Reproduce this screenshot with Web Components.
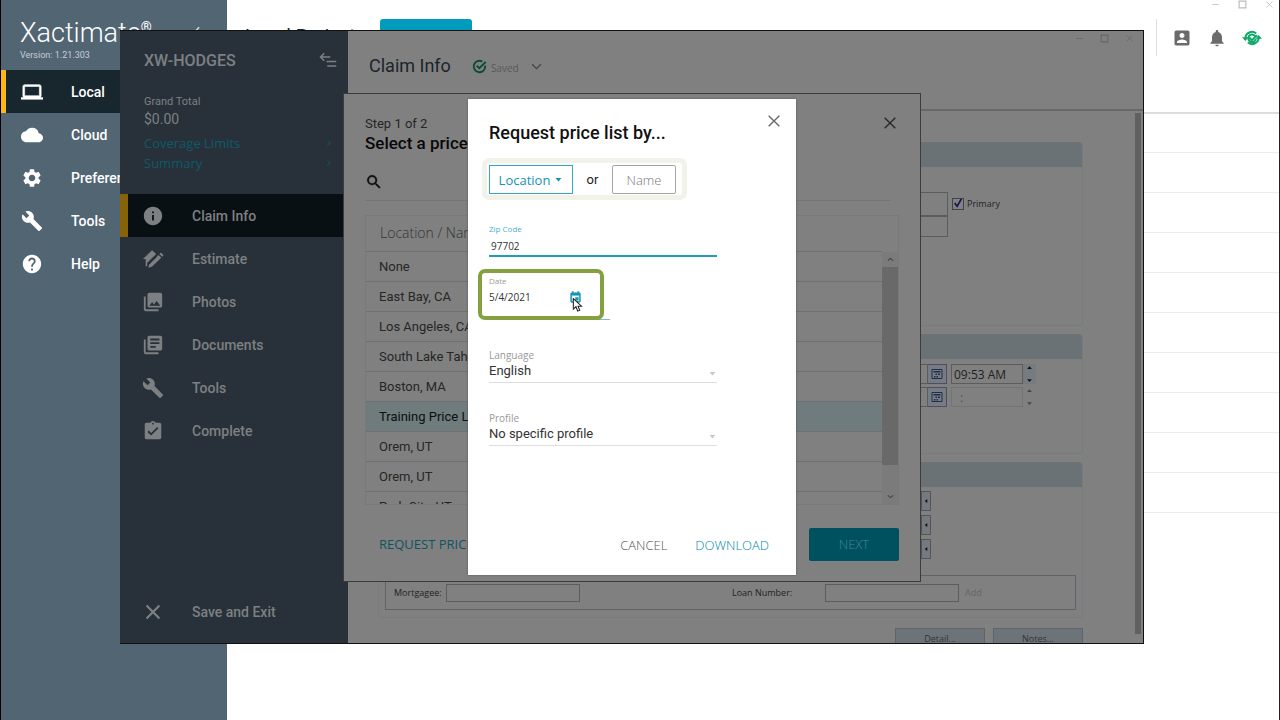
<!DOCTYPE html>
<html lang="en">
<head>
<meta charset="utf-8">
<title>Xactimate</title>
<style>
html,body{height:100%;margin:0}
body{font-family:Roboto,sans-serif;background:#fff;overflow:hidden}
</style>
</head>
<body>
<xm-app></xm-app>
<script>
const define = (name, css, html) => customElements.define(name, class extends HTMLElement {
  connectedCallback() {
    if (this.shadowRoot) return;
    const root = this.attachShadow({ mode: 'open' });
    root.innerHTML = '<style>*{box-sizing:border-box}button,input,select{font:inherit;color:inherit;margin:0;padding:0;border:0;background:none;border-radius:0;appearance:none;outline:0}a{color:inherit;text-decoration:none}' + css + '</style>' + (typeof html === 'function' ? html(this) : html);
  }
});

const ICONS = {
  laptop: '<path d="M20 18c1.100 0 2-.9 2-2V6c0-1.100-.9-2-2-2H4c-1.100 0-2 .9-2 2v10c0 1.100.9 2 2 2H0v2h24v-2h-4zM4 6h16v10H4V6z" stroke="currentColor" stroke-width=".6"/>',
  cloud: '<path d="M19.350 10.040A7.490 7.490 0 0 0 12 4C9.110 4 6.600 5.640 5.350 8.040A5.994 5.994 0 0 0 0 14c0 3.310 2.690 6 6 6h13c2.760 0 5-2.240 5-5 0-2.640-2.050-4.780-4.650-4.960z"/>',
  gear: '<path d="M19.140 12.940c.04-.3.06-.61.06-.94 0-.32-.02-.64-.07-.94l2.030-1.580a.49.49 0 0 0 .12-.61l-1.920-3.320a.488.488 0 0 0-.59-.22l-2.390.96c-.5-.38-1.030-.7-1.620-.94l-.36-2.540a.484.484 0 0 0-.48-.41h-3.840c-.24 0-.43.17-.47.41l-.36 2.540c-.59.24-1.130.57-1.620.94l-2.390-.96c-.22-.08-.47 0-.59.22L2.740 8.870c-.12.21-.08.47.12.61l2.030 1.580c-.05.3-.09.63-.09.94s.02.64.07.94l-2.030 1.580a.49.49 0 0 0-.12.61l1.920 3.320c.12.22.37.29.59.22l2.390-.96c.5.38 1.030.7 1.620.94l.36 2.540c.05.24.24.41.48.41h3.840c.24 0 .44-.17.47-.41l.36-2.540c.59-.24 1.130-.56 1.620-.94l2.390.96c.22.08.47 0 .59-.22l1.920-3.320c.12-.22.07-.47-.12-.61l-2.010-1.580zM12 15.600c-1.980 0-3.600-1.620-3.600-3.600s1.620-3.600 3.600-3.600 3.600 1.620 3.600 3.600-1.620 3.600-3.600 3.600z"/>',
  wrench: '<path d="M22.700 19l-9.100-9.100c.9-2.300.4-5-1.500-6.900-2-2-5-2.400-7.400-1.300L9 6 6 9 1.600 4.700C.4 7.100.9 10.100 2.900 12.100c1.900 1.900 4.600 2.400 6.900 1.500l9.100 9.100c.4.4 1 .4 1.400 0l2.300-2.300c.5-.4.5-1.100.1-1.400z"/>',
  help: '<path d="M12 2C6.480 2 2 6.480 2 12s4.480 10 10 10 10-4.480 10-10S17.520 2 12 2zm1 17h-2v-2h2v2zm2.070-7.750-.9.920C13.450 12.900 13 13.500 13 15h-2v-.5c0-1.100.45-2.100 1.170-2.830l1.240-1.260c.37-.36.59-.86.59-1.410 0-1.100-.9-2-2-2s-2 .9-2 2H8c0-2.210 1.790-4 4-4s4 1.790 4 4c0 .88-.36 1.680-.93 2.250z"/>',
  info: '<path d="M12 2C6.480 2 2 6.480 2 12s4.480 10 10 10 10-4.480 10-10S17.520 2 12 2zm1 15h-2v-6h2v6zm0-8h-2V7h2v2z"/>',
  estimate: '<path d="M1 12 11 2.500l4.500 4-9.800 9.600V20H4v-8z"/><path d="M7 21.500l.8-4L18 7.500l3 3-10.200 10z"/><path d="M19 6.500l1.500-1.500 3 3L22 9.500z"/><path d="M7.500 17.500 16 9.200" stroke="#283139" stroke-width="1.200"/>',
  photos: '<path d="M22 16V4c0-1.100-.9-2-2-2H8c-1.100 0-2 .9-2 2v12c0 1.100.9 2 2 2h12c1.100 0 2-.9 2-2zm-11-4 2.030 2.710L16 11l4 5H8l3-4zM2 6v14c0 1.100.9 2 2 2h14v-2H4V6H2z"/>',
  docs: '<path d="M4 6H2v14c0 1.100.9 2 2 2h14v-2H4V6zm16-4H8c-1.100 0-2 .9-2 2v12c0 1.100.9 2 2 2h12c1.100 0 2-.9 2-2V4c0-1.100-.9-2-2-2zm-1 9H9V9h10v2zm-4 4H9v-2h6v2zm4-8H9V5h10v2z"/>',
  complete: '<path d="M19 3h-4.180C14.400 1.840 13.300 1 12 1s-2.400.84-2.820 2H5c-1.100 0-2 .9-2 2v14c0 1.100.9 2 2 2h14c1.100 0 2-.9 2-2V5c0-1.100-.9-2-2-2zm-7 0c.55 0 1 .45 1 1s-.45 1-1 1-1-.45-1-1 .45-1 1-1zm-2 14-4-4 1.410-1.410L10 14.170l6.590-6.590L18 9l-8 8z"/>',
  close: '<path d="M4 4 20 20M20 4 4 20" fill="none" stroke="currentColor" stroke-width="2"/>',
  exit: '<path d="M5 5 19 19M19 5 5 19" fill="none" stroke="currentColor" stroke-width="2.400"/>',
  collapse: '<path d="M7 3 2 8l5 5M2 8h13M10 14h13M11 20h12" fill="none" stroke="currentColor" stroke-width="2"/>',
  search: '<path d="M15.500 14h-.79l-.28-.27A6.471 6.471 0 0 0 16 9.500 6.500 6.500 0 1 0 9.500 16c1.610 0 3.090-.59 4.230-1.570l.27.28v.79l5 4.990L20.490 19l-4.990-5zm-6 0C7.010 14 5 11.990 5 9.500S7.010 5 9.500 5 14 7.010 14 9.500 11.990 14 9.500 14z" stroke="currentColor" stroke-width=".5"/>',
  saved: '<path d="M21 10.500A9.200 9.200 0 1 1 16.500 4M7.500 10.500l4.200 4.200L22 4.500" fill="none" stroke="currentColor" stroke-width="3"/>',
  chevron: '<path d="M4 8l8 8 8-8" fill="none" stroke="currentColor" stroke-width="2.500"/>',
  up: '<path d="M5 15l7-6 7 6" fill="none" stroke="currentColor" stroke-width="3"/>',
  down: '<path d="M5 9l7 6 7-6" fill="none" stroke="currentColor" stroke-width="3"/>',
  right: '<path d="M7 5l9 7-9 7" fill="none" stroke="currentColor" stroke-width="2.500"/>',
  triangle: '<path d="M4 8h16l-8 9z"/>',
  triangleUp: '<path d="M4 17h16l-8-9z"/>',
  triangleLeft: '<path d="M17 4v16l-10-8z"/>',
  person: '<path d="M3 5v14c0 1.100.89 2 2 2h14c1.100 0 2-.9 2-2V5c0-1.100-.9-2-2-2H5c-1.110 0-2 .9-2 2zm12 4c0 1.660-1.340 3-3 3s-3-1.340-3-3 1.340-3 3-3 3 1.340 3 3zm-9 8c0-2 4-3.100 6-3.100s6 1.100 6 3.100v1H6v-1z"/>',
  bell: '<path d="M12 22c1.100 0 2-.9 2-2h-4c0 1.100.89 2 2 2zm6-6v-5c0-3.070-1.640-5.640-4.500-6.320V4c0-.83-.67-1.500-1.500-1.500s-1.500.67-1.500 1.500v.68C7.630 5.360 6 7.920 6 11v5l-2 2v1h16v-1l-2-2z"/>',
  sync: '<path d="M4 12a8 8 0 0 1 13-5.500M20 12a8 8 0 0 1-13 5.500M15.500 9.500A4.500 4.500 0 1 0 16.500 13M9 11.500l3 3 6-6" fill="none" stroke="currentColor" stroke-width="2.400"/><path d="M0 11h8l-4 4.500zM16 13h8l-4-4.500z"/>',
  minus: '<path d="M3 12h18" fill="none" stroke="currentColor" stroke-width="2"/>',
  square: '<path d="M3 3h18v18H3z" fill="none" stroke="currentColor" stroke-width="3"/>',
  calendar: '<path d="M17 12h-5v5h5v-5zM16 1v2H8V1H6v2H5c-1.110 0-1.990.9-1.990 2L3 19c0 1.100.89 2 2 2h14c1.100 0 2-.9 2-2V5c0-1.100-.9-2-2-2h-1V1h-2zm3 18H5V8h14v11z" stroke="currentColor"/>',
  grid: '<path d="M2 3h20v18H2z" fill="none" stroke="currentColor" stroke-width="2"/><path d="M5 6h14v3H5zM9 11h3v3H9zM14 11h4v3h-4zM6 16h3v3H6zM11 16h3v3h-3z"/>',
  cursor: '<path d="M4 1v18l4.500-4 3 7.500 3.500-1.500-3-7H18z" fill="#fff" stroke="#222" stroke-width="1.800"/>'
};

define('xm-icon', ':host{display:inline-flex;flex:none;width:var(--s,20px);height:var(--s,20px)}svg{width:100%;height:100%;display:block}',
  el => `<svg viewBox="0 0 24 24" fill="currentColor" aria-hidden="true">${ICONS[el.getAttribute('name')]}</svg>`);

define('xm-nav-item', `:host{display:block}
a{display:flex;align-items:center;height:43px;padding-left:var(--pad,20px);gap:28px;font-size:14px;font-weight:500;line-height:20px;white-space:nowrap}
:host([active]) a{background:var(--active-bg);box-shadow:inset var(--bar,5px) 0 0 var(--accent)}`,
  el => `<a href="#"><xm-icon name="${el.getAttribute('icon')}" style="--s:22px"></xm-icon><span><slot></slot></span></a>`);

define('xm-window-buttons', `:host{display:flex;gap:var(--g,16px);color:var(--c,#bbb)}button{display:flex}`,
  `<button aria-label="Minimize"><xm-icon name="minus" style="--s:9px"></xm-icon></button><button aria-label="Maximize"><xm-icon name="square" style="--s:9px"></xm-icon></button><button aria-label="Close"><xm-icon name="close" style="--s:9px"></xm-icon></button>`);

define('xm-sidebar', `:host{display:block;width:227px;flex:none;background:#526573;color:#fff;border-left:1px solid #000;--active-bg:#18262e;--accent:#fdb813}
header{height:70px;padding:17px 15px 0 19px;display:flex;justify-content:space-between}
h1{margin:0;font-weight:300;font-size:27px;line-height:32px;display:flex}
sup{font-size:14px;line-height:20px;font-weight:400}
p{margin:0;font-size:9px;line-height:12px;color:#c5ced5}
xm-icon{margin-top:8px;color:#d5dbe0}`,
  `<header><div><h1>Xactimate<sup>®</sup></h1><p>Version: 1.21.303</p></div><xm-icon name="collapse" style="--s:18px"></xm-icon></header>
<nav><xm-nav-item icon="laptop" active>Local</xm-nav-item><xm-nav-item icon="cloud">Cloud</xm-nav-item><xm-nav-item icon="gear">Preferences</xm-nav-item><xm-nav-item icon="wrench">Tools</xm-nav-item><xm-nav-item icon="help">Help</xm-nav-item></nav>`);

define('xm-projects', `:host{display:block;flex:1;min-width:0;border-right:1px solid #222}
header{height:114px;border-bottom:2px solid #dcdcdc;display:flex;flex-direction:column}
xm-window-buttons{align-self:flex-end;height:12px;margin-right:5px;--g:18px}
.bar{display:flex;align-items:flex-start;padding:7px 17px 0 18px}
h2{margin:5px 0 0;font-size:19px;line-height:24px;font-weight:400;color:#18262e;width:135px;white-space:nowrap}
.new{width:92px;height:36px;background:#009bbd;border-radius:3px}
.tools{margin-left:auto;display:flex;align-items:center;gap:15px;height:37px;border-left:1px solid #ddd;padding-left:15px;color:#6b6b6b}
.tools button{display:flex}.sync{color:#0ea968}
ul{list-style:none;margin:0;padding:0}li{height:40px;border-bottom:1px solid #ececec}li:first-child{height:39px}`,
  `<header><xm-window-buttons></xm-window-buttons><div class="bar"><h2>Local Projects</h2><button class="new" aria-label="New project"></button>
<div class="tools"><button aria-label="Account"><xm-icon name="person"></xm-icon></button><button aria-label="Notifications"><xm-icon name="bell"></xm-icon></button><button class="sync" aria-label="Sync"><xm-icon name="sync"></xm-icon></button></div></div></header>
<ul>${'<li></li>'.repeat(10)}</ul>`);

define('xm-project-nav', `:host{display:flex;flex-direction:column;width:228px;flex:none;background:#283139;color:#7d8083;--active-bg:#091013;--accent:#866309;--bar:8px;--pad:22px}
header{height:163px;padding:20px 11px 0 24px}
.top{display:flex;justify-content:space-between}
h2{margin:0;font-size:16px;line-height:20px;font-weight:500}
.total{font-size:11px;line-height:14px;margin:24px 0 0}
.sum{font-size:14px;line-height:20px;margin:0 0 4px}
.link{display:flex;justify-content:space-between;align-items:center;font:13px/20px "Open Sans",sans-serif;color:#0e5a6b;padding-right:4px}
nav{flex:1}.exit{margin-bottom:10px}`,
  `<header><div class="top"><h2>XW-HODGES</h2><xm-icon name="collapse" style="--s:18px"></xm-icon></div>
<p class="total">Grand Total</p><p class="sum">$0.00</p>
<a class="link" href="#">Coverage Limits<xm-icon name="right" style="--s:8px"></xm-icon></a><a class="link" href="#">Summary<xm-icon name="right" style="--s:8px"></xm-icon></a></header>
<nav><xm-nav-item icon="info" active>Claim Info</xm-nav-item><xm-nav-item icon="estimate">Estimate</xm-nav-item><xm-nav-item icon="photos">Photos</xm-nav-item><xm-nav-item icon="docs">Documents</xm-nav-item><xm-nav-item icon="wrench">Tools</xm-nav-item><xm-nav-item icon="complete">Complete</xm-nav-item></nav>
<xm-nav-item class="exit" icon="exit">Save and Exit</xm-nav-item>`);

define('xm-group', `:host{display:block;border:1px solid #787b7c;border-top:0;border-radius:4px;margin-bottom:8px}
.head{height:25px;background:#6b7276;border-radius:4px 4px 0 0}`, `<div class="head"></div><slot></slot>`);

define('xm-claim', `:host{display:flex;flex-direction:column;flex:1;min-width:0;background:#808080;color:#222;font:9px/14px "Open Sans",sans-serif}
header{height:80px;flex:none;border-bottom:2px solid #686868;display:flex;flex-direction:column}
xm-window-buttons{align-self:flex-end;margin:3px 10px 0 0;--c:#666}
.title{display:flex;align-items:center;padding:11px 0 0 21px}
h2{margin:0 21px 0 0;font:400 18px/24px Roboto,sans-serif;color:#1b242b}
.ok{color:#0a4a34;margin-right:4px}.saved{font-size:10px;line-height:14px;padding-top:3px;color:#5a5a5a;margin-right:11px}.chev{color:#444}
.body{flex:1;min-height:0;overflow:hidden;display:flex;padding-right:3px}
.form{flex:1;min-width:0;padding:31px 52px 0 30px}
.track{width:6px;margin:2px 0 9px;background:#606060}
.g1{height:184px}.g2{height:120px}.g3{height:156px;margin-bottom:10px}
.row{display:flex;align-items:center}
input{border:1px solid #5c5c5c;height:20px}
.wide{flex:1;min-width:0}
.name{padding-right:77px;margin-top:25px;gap:4px}.name input.wide{height:24px}
.second{padding-right:134px}.second input{height:21px}
input[type=checkbox]{width:12px;height:12px;border:1px solid #444;background:#80808c;display:block}
.check{display:flex;align-items:center;gap:3px;position:relative;width:53px}
.check svg{position:absolute;left:1px;top:1px;width:10px;height:10px;pointer-events:none}
.when{padding-right:46px;margin-top:5px}.when+.when{margin-top:3px}
.cal{width:19px;height:20px;border:1px solid #4b515c;border-left:0;display:grid;place-items:center;color:#202c4c;background:#777c84;margin-right:4px}
.time{width:72px;font-size:12px;padding:0 2px;color:#222}.off{border-color:#747474;color:#555;padding-left:8px}
.spin{width:13px;height:20px;display:flex;flex-direction:column;align-items:center;justify-content:space-between;background:#767b80;color:#111}
.spin button{display:flex}
.idle{background:none;color:#444}
.pick{padding-right:151px;margin-top:4px}.pick .arrow{width:10px;height:20px;border:1px solid #555;display:grid;place-items:center;background:#747a80;color:#111}
.mort{border:1px solid #60646a;margin:16px 6px 0;height:35px;padding:0 8px;gap:4px}
.mort input{height:18px;width:134px}.add{color:#666;margin-left:2px;width:102px;text-align:left;line-height:14px}.loan{margin-left:auto;width:89px}
.buttons{display:flex;justify-content:flex-end;gap:8px}.buttons button{width:90px;height:22px;border:1px solid #5e6469;background:#6d7479;color:#333;flex:none}`,
  `<header><xm-window-buttons></xm-window-buttons><div class="title"><h2>Claim Info</h2><xm-icon class="ok" name="saved" style="--s:15px"></xm-icon><span class="saved">Saved</span><xm-icon class="chev" name="chevron" style="--s:13px"></xm-icon></div></header>
<div class="body"><div class="form">
<xm-group class="g1"><div class="row name"><input class="wide" aria-label="Insured"><label class="check"><input type="checkbox" checked><svg viewBox="0 0 12 12"><path d="M2 6l3 4 5-9" fill="none" stroke="#151540" stroke-width="2"/></svg>Primary</label></div><div class="row second"><input class="wide" aria-label="Address"></div></xm-group>
<xm-group class="g2">
<div class="row when"><input class="wide" aria-label="Date of loss"><button class="cal" aria-label="Pick date"><xm-icon name="grid" style="--s:12px"></xm-icon></button><input class="time" value="09:53 AM" aria-label="Time of loss"><div class="spin"><button aria-label="Later"><xm-icon name="triangleUp" style="--s:7px"></xm-icon></button><button aria-label="Earlier"><xm-icon name="triangle" style="--s:7px"></xm-icon></button></div></div>
<div class="row when"><input class="wide" aria-label="Date received"><button class="cal" aria-label="Pick date"><xm-icon name="grid" style="--s:12px"></xm-icon></button><input class="time off" value=":" aria-label="Time received"><div class="spin idle"><button aria-label="Later"><xm-icon name="triangleUp" style="--s:7px"></xm-icon></button><button aria-label="Earlier"><xm-icon name="triangle" style="--s:7px"></xm-icon></button></div></div>
</xm-group>
<xm-group class="g3">${'<div class="row pick"><input class="wide" aria-label="Policy field"><button class="arrow" aria-label="Choose"><xm-icon name="triangleLeft" style="--s:6px"></xm-icon></button></div>'.repeat(3)}
<div class="row mort"><label for="mo">Mortgagee:</label><input id="mo"><label class="loan" for="ln">Loan Number:</label><input id="ln"><button class="add">Add</button></div></xm-group>
<div class="buttons"><button>Detail...</button><button>Notes...</button></div>
</div><div class="track"></div></div>`);

const places = ['None', 'East Bay, CA', 'Los Angeles, CA', 'South Lake Tahoe, CA', 'Boston, MA', 'Training Price List', 'Orem, UT', 'Orem, UT', 'Park City, UT'];

define('xm-price-wizard', `:host{display:flex;flex-direction:column;width:578px;border:1px solid #3c3c3c;background:#808080;color:#262626;padding:20px 21px;font-size:13px}
.top{display:flex;justify-content:space-between;align-items:flex-start}
p{margin:0;font-size:13px;line-height:20px}h3{margin:0;color:#080808;font-size:17px;line-height:19px;font-weight:500}
.x{display:flex;margin:1px 1px 0}
.search{display:flex;height:48px;align-items:center;padding-top:12px;border-bottom:1px solid #747474;margin:0 8px 14px 0;color:#0c0c0c}
.search input{flex:1;height:20px}
.list{display:flex;height:290px;border:1px solid #797979;margin-bottom:23px}
.rows{flex:1;overflow:hidden}
table{width:100%;border-collapse:collapse}
th{height:36px;font:300 14px/20px "Open Sans",sans-serif;color:#333;text-align:left;padding:0 14px}
td{height:30px;border-top:1px solid #707070;padding:0 13px;line-height:18px}
.sel td{background:#6f7b7c;color:#0b0f10}
.bar{width:16px;margin-top:36px;background:#7b7b7b;display:flex;flex-direction:column;align-items:center;color:#444}
.bar button{height:15px;display:flex;align-items:center}.thumb{width:100%;height:198px;background:#696969}.bar button:last-child{margin-top:auto}
footer{display:flex;justify-content:space-between;align-items:center;padding-left:14px}
.req{font:13px/20px "Open Sans",sans-serif;color:#0e5563}
.next{width:90px;height:33px;background:#00515f;border-radius:2px;color:#47858f;font:300 13px/20px "Open Sans",sans-serif}`,
  `<div class="top"><div><p>Step 1 of 2</p><h3>Select a price list</h3></div><button class="x" aria-label="Close"><xm-icon name="close" style="--s:16px"></xm-icon></button></div>
<div class="search"><xm-icon name="search" style="--s:18px"></xm-icon><input aria-label="Search price lists"></div>
<div class="list"><div class="rows"><table><thead><tr><th>Location / Name</th></tr></thead><tbody>${places.map((p, i) => `<tr${i === 5 ? ' class="sel"' : ''}><td>${p}</td></tr>`).join('')}</tbody></table></div><div class="bar"><button aria-label="Scroll up"><xm-icon name="up" style="--s:9px"></xm-icon></button><div class="thumb"></div><button aria-label="Scroll down"><xm-icon name="down" style="--s:9px"></xm-icon></button></div></div>
<footer><button class="req">REQUEST PRICE LIST</button><button class="next">NEXT</button></footer>`);

define('xm-request', `:host{display:flex;flex-direction:column;width:328px;background:#fff;color:#333;padding:14px 14px 17px 21px;font-size:13px;box-shadow:0 0 2px #555}
.top{display:flex;justify-content:space-between;align-items:flex-start}
h3{margin:9px 0 0;color:#111;font-size:18px;line-height:22px;font-weight:500}
.x{display:flex;color:#666}
.by{align-self:flex-start;display:flex;align-items:center;margin:14px 0 0 -7px;padding:2px 6px 1px 2px;border:5px solid #f1f2e9;border-radius:7px;color:#222}
.by button{height:29px;font:13px/20px "Open Sans",sans-serif}
.by .loc{width:84px;border:1px solid #35a5c8;color:#1692b8;display:flex;align-items:center;justify-content:center;gap:4px}
.by span{width:39px;text-align:center;font-size:13px}
.by .name{width:64px;border:1px solid #a5a5a5;border-radius:2px;color:#777;font-weight:300}
label{display:block;font:10px/14px "Open Sans",sans-serif;color:#999}
.small{font-size:8px;line-height:12px}
.field{width:228px}
.zip{margin-top:23px;border-bottom:2px solid #1e9cbb}.zip label{color:#4bb0d0;margin-bottom:2px}
.zip input,.date input{font:10px/16px "Open Sans",sans-serif;width:100%;height:18px;display:block;padding:0 2px}
.date{position:relative;width:121px;margin-top:18px;border-bottom:1px solid #7db9ca;height:45px}
.line{display:flex;align-items:center}.date input{width:80px;padding:0;height:20px}.date button{display:flex;color:#1993b5}
.mark{position:absolute;inset:-6px 6px -1px -11px;border:4px solid #84a041;border-radius:7px;pointer-events:none}
.cur{position:absolute;left:82px;top:23px}
.sel{position:relative;border-bottom:1px solid #ddd;height:35px;margin-top:28px}
select{display:block;width:100%;font-size:13px;line-height:16px;height:17px}
.sel xm-icon{position:absolute;right:0;bottom:4px;color:#c8c8c8}
footer{display:flex;justify-content:flex-end;gap:28px;padding:87px 13px 0 0;font:300 13px/20px "Open Sans",sans-serif;color:#555}
footer button{line-height:25px}
footer button:last-child{color:#0088ad}`,
  `<div class="top"><h3>Request price list by...</h3><button class="x" aria-label="Close"><xm-icon name="close" style="--s:16px"></xm-icon></button></div>
<div class="by"><button class="loc">Location<xm-icon name="triangle" style="--s:9px"></xm-icon></button><span>or</span><button class="name">Name</button></div>
<div class="field zip"><label class="small" for="z">Zip Code</label><input id="z" value="97702"></div>
<div class="date"><label class="small" for="d">Date</label><div class="line"><input id="d" value="5/4/2021"><button aria-label="Open calendar"><xm-icon name="calendar" style="--s:13px"></xm-icon></button></div><div class="mark"></div><xm-icon class="cur" name="cursor" style="--s:14px"></xm-icon></div>
<div class="field sel"><label for="l">Language</label><select id="l"><option>English</option></select><xm-icon name="triangle" style="--s:9px"></xm-icon></div>
<div class="field sel"><label for="p">Profile</label><select id="p"><option>No specific profile</option></select><xm-icon name="triangle" style="--s:9px"></xm-icon></div>
<footer><button>CANCEL</button><button>DOWNLOAD</button></footer>`);

define('xm-app', `:host{display:flex;height:100vh;position:relative;overflow:hidden}
.win{position:absolute;inset:30px 136px 76px 120px;display:flex;padding:1px 0}
.win::after{content:"";position:absolute;inset:0;border:1px solid #111;border-left:0;pointer-events:none}
.layer{position:absolute;inset:0;display:grid;place-items:center;pointer-events:none}.layer>*{pointer-events:auto}`,
  `<xm-sidebar></xm-sidebar><xm-projects></xm-projects>
<div class="win"><xm-project-nav></xm-project-nav><xm-claim></xm-claim>
<div class="layer"><xm-price-wizard></xm-price-wizard></div><div class="layer"><xm-request></xm-request></div></div>`);
</script>
</body>
</html>
